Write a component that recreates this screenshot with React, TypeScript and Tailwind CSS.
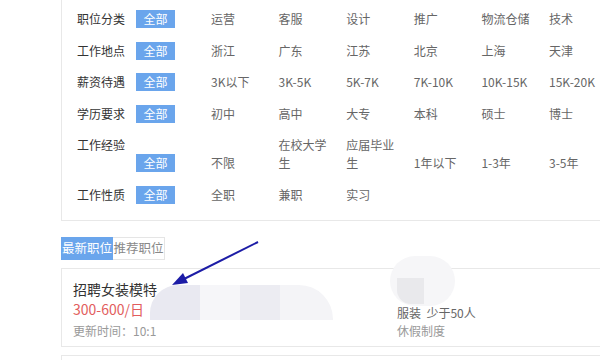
import React from "react";

const FONT = { fontFamily: '"Microsoft YaHei", "Noto Sans CJK SC", "Liberation Sans", sans-serif' };

type Row = { label: string; options: string[]; tall?: boolean };

const ROWS: Row[] = [
  { label: "职位分类", options: ["运营", "客服", "设计", "推广", "物流仓储", "技术"] },
  { label: "工作地点", options: ["浙江", "广东", "江苏", "北京", "上海", "天津"] },
  { label: "薪资待遇", options: ["3K以下", "3K-5K", "5K-7K", "7K-10K", "10K-15K", "15K-20K"] },
  { label: "学历要求", options: ["初中", "高中", "大专", "本科", "硕士", "博士"] },
  { label: "工作经验", options: ["不限", "在校大学生", "应届毕业生", "1年以下", "1-3年", "3-5年"], tall: true },
  { label: "工作性质", options: ["全职", "兼职", "实习"] },
];

function FilterRow({ row }: { row: Row }) {
  if (row.tall) {
    return (
      <div className="flex h-[49.75px] items-end pb-[7px] leading-[18px]">
        <div className="w-[59px] shrink-0 self-start pt-[6.5px] text-[12px] text-[#333]">{row.label}</div>
        <div className="w-[75px] shrink-0">
          <span className="flex h-[18px] w-[39px] items-center justify-center bg-[#6aa5ec] text-[12px] text-white">全部</span>
        </div>
        {row.options.map((o) => (
          <div key={o} className="w-[67.6px] shrink-0 pr-[12px] text-[12px] text-[#666]">
            {o}
          </div>
        ))}
      </div>
    );
  }
  return (
    <div className="flex h-[31.5px] items-center leading-[18px]">
      <div className="w-[59px] shrink-0 text-[12px] text-[#333]">{row.label}</div>
      <div className="w-[75px] shrink-0">
        <span className="flex h-[18px] w-[39px] items-center justify-center bg-[#6aa5ec] text-[12px] text-white">全部</span>
      </div>
      {row.options.map((o) => (
        <div key={o} className="w-[67.6px] shrink-0 whitespace-nowrap pr-[12px] text-[12px] text-[#666]">
          {o}
        </div>
      ))}
    </div>
  );
}

export default function App() {
  return (
    <div className="relative h-[360px] w-[600px] overflow-hidden bg-white" style={FONT}>
      <div className="ml-[61px] w-[620px]">
        {/* filter panel */}
        <div className="border-b border-l border-[#e8e8e8] pb-[9px] pl-[15px] pt-[3.5px]">
          {ROWS.map((r) => (
            <FilterRow key={r.label} row={r} />
          ))}
        </div>

        {/* tabs */}
        <div className="mt-[16.5px] flex h-[22.5px] text-[12.5px] leading-[22px]">
          <div className="w-[52px] bg-[#6aa5ec] text-center text-white">最新职位</div>
          <div className="w-[52px] border border-l-0 border-[#e5e5e5] text-center leading-[20px] text-[#888]">推荐职位</div>
        </div>

        {/* job card */}
        <div className="mt-[8px] flex h-[79px] border border-[#e8e8e8] pl-[11px]">
          <div className="w-[324px] shrink-0 pt-[10px]">
            <div className="text-[14px] leading-[20px] text-[#333]">招聘女装模特</div>
            <div className="text-[14px] leading-[20px] text-[#e25d5d]">300-600/日</div>
            <div className="mt-[2px] text-[12px] leading-[20px] text-[#999]">更新时间：10:1</div>
          </div>
          <div className="pt-[35px] text-[12px] leading-[18px]">
            <div className="text-[#666]">服装&nbsp;&nbsp;少于50人</div>
            <div className="text-[#999]">休假制度</div>
          </div>
        </div>
        <div className="mt-[8px] h-[40px] border border-[#e8e8e8]" />
      </div>

      {/* smudges over the card */}
      <div className="absolute left-[150px] top-[285px] flex h-[35px] w-[183px] overflow-hidden rounded-tl-[28px] rounded-tr-[34px]">
        <div className="w-[50px] bg-[#e9e9f1]" />
        <div className="w-[40px] bg-[#f6f6f9]" />
        <div className="w-[40px] bg-[#ececf2]" />
        <div className="flex-1 bg-[#f4f4f7]" />
      </div>
      <div className="absolute left-[157px] top-[320px] h-[24px] w-[180px] bg-white" />
      <div className="absolute left-[390px] top-[256px] h-[50px] w-[65px] rounded-full bg-[#f6f6f8]" />
      <div className="absolute left-[397px] top-[278px] h-[26px] w-[27px] rounded-bl-[14px] bg-[#e9e9ec]" />

      {/* arrow */}
      <svg className="absolute left-0 top-0" width="600" height="360" viewBox="0 0 600 360">
        <line x1="258" y1="242" x2="182" y2="280" stroke="#1c1ca6" strokeWidth="2" />
        <polygon points="172,285 183,273 188,283" fill="#1c1ca6" />
      </svg>
    </div>
  );
}
